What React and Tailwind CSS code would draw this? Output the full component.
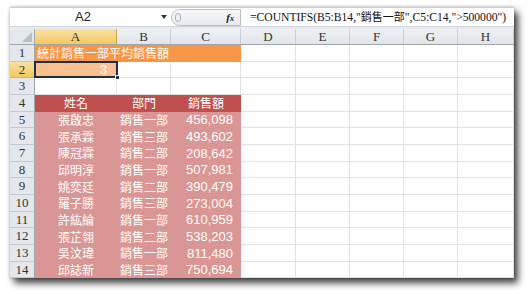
import React from 'react';

const colW = ['w-[82px]', 'w-[54px]', 'w-[70px]', 'w-[55px]', 'w-[54px]', 'w-[54px]', 'w-[54px]', 'w-[56px]'];
const colNames = ['A', 'B', 'C', 'D', 'E', 'F', 'G', 'H'];

const rows = [
    ['張啟忠', '銷售一部', '456,098'],
    ['張承霖', '銷售三部', '493,602'],
    ['陳冠霖', '銷售二部', '208,642'],
    ['邱明淳', '銷售一部', '507,981'],
    ['姚奕廷', '銷售二部', '390,479'],
    ['羅子勝', '銷售三部', '273,004'],
    ['許紘綸', '銷售一部', '610,959'],
    ['張芷翎', '銷售二部', '538,203'],
    ['吳汶瑋', '銷售一部', '811,480'],
    ['邱誌新', '銷售三部', '750,694'],
];

const cjk = "font-['Noto_Sans_CJK_TC',sans-serif]";
const num = "font-['Liberation_Sans','Noto_Sans_CJK_TC',sans-serif]";
const hdr = "font-['Liberation_Serif',serif]";

const RowHead = ({ n, active }) => (
    <div className={`w-[25px] shrink-0 h-full flex items-center justify-center border-r border-b text-[13px] text-[#333] ${hdr} ${active ? 'bg-gradient-to-b from-[#fbe2a2] to-[#f4c860] border-r-[#c9a24a] border-b-[#d6b45e]' : 'bg-[#e4e8ec] border-r-[#9ea7b2] border-b-[#c3c9d0]'}`}>
        {n}
    </div>
);

const Blank = ({ i }) => (
    <div className={`${colW[i]} shrink-0 h-full border-r border-b border-[#dfe1e3] bg-white`} />
);

const Row = ({ n, active, children }) => (
    <div className="flex h-[16.67px] shrink-0">
        <RowHead n={n} active={active} />
        {children}
    </div>
);

const FormulaBar = () => (
    <div className="h-[20px] flex items-center bg-white border-t border-[#c9ced4] border-b border-b-[#d0d5db]">
        <div className={`w-[146px] text-center text-[13px] text-[#222] ${num}`}>A2</div>
        <div className="w-[15px] flex justify-center">
            <span className="block w-0 h-0 border-l-[3px] border-r-[3px] border-t-[4px] border-l-transparent border-r-transparent border-t-[#333]" />
        </div>
        <div className="w-[70px] h-[17px] flex items-center rounded-l-full border border-[#b9c0c8] bg-gradient-to-b from-[#f7f8fa] to-[#e6e9ed]">
            <span className="ml-[3px] w-[6px] h-[9px] rounded-full border border-[#aab2bc] bg-[#eef0f3]" />
            <span className={`ml-auto mr-[6px] text-[11px] italic font-bold text-[#222] ${hdr}`}>f<span className="text-[8px]">x</span></span>
        </div>
        <div className={`flex-1 pl-[9px] whitespace-nowrap text-[11.6px] text-[#111] ${hdr} overflow-hidden`}>
            =COUNTIFS(B5:B14,"<span className={cjk + ' text-[11px]'}>銷售一部</span>",C5:C14,"&gt;500000")
        </div>
    </div>
);

export default function App() {
    return (
        <div className="w-[529px] h-[294px] bg-white overflow-hidden pt-[7px] pl-[10px]">
            <div className="w-[504px] h-[271px] bg-white flex flex-col overflow-hidden shadow-[4px_5px_7px_rgba(0,0,0,0.75),0_0_3px_rgba(0,0,0,0.25)]">
                <FormulaBar />
                <div className="h-[2px] bg-[#e9ecef] shrink-0" />

                {/* column headers */}
                <div className="flex h-[16px] shrink-0 border-b border-[#9da5ae]">
                    <div className="w-[25px] shrink-0 relative bg-[#e4e8ec] border-r border-[#9ea7b2]">
                        <svg className="absolute right-[2px] bottom-[2px]" width="10" height="10"><polygon points="10,0 10,10 0,10" fill="#b9bfc7" /></svg>
                    </div>
                    {colNames.map((c, i) => (
                        <div key={c} className={`${colW[i]} shrink-0 flex items-center justify-center border-r text-[13px] text-[#333] ${hdr} ${i === 0 ? 'bg-gradient-to-b from-[#fbe2a2] to-[#f4c860] border-[#c9a24a]' : 'bg-gradient-to-b from-[#eef1f4] to-[#e1e5ea] border-[#c9ced4]'}`}>
                            {c}
                        </div>
                    ))}
                </div>

                {/* row 1 */}
                <Row n={1}>
                    <div className={`w-[206px] shrink-0 h-full bg-[#f79646] text-white text-[12px] leading-none flex items-center pl-[2px] ${cjk}`}>
                        統計銷售一部平均銷售額
                    </div>
                    {[3, 4, 5, 6, 7].map(i => <Blank key={i} i={i} />)}
                </Row>

                {/* row 2 */}
                <Row n={2} active>
                    <div className="w-[82px] shrink-0 h-full relative bg-[#fac090] border-b border-[#fac090] flex items-center justify-end pr-[10px]">
                        <span className={`text-white text-[13px] ${num}`}>3</span>
                        <span className="absolute -left-[1px] -top-[1px] -right-[1px] -bottom-[1px] border-2 border-[#1b2f4a]" />
                        <span className="absolute -right-[3px] -bottom-[3px] w-[5px] h-[5px] bg-[#1b2f4a] border border-white" />
                    </div>
                    {[1, 2, 3, 4, 5, 6, 7].map(i => <Blank key={i} i={i} />)}
                </Row>

                {/* row 3 */}
                <Row n={3}>
                    {[0, 1, 2, 3, 4, 5, 6, 7].map(i => <Blank key={i} i={i} />)}
                </Row>

                {/* row 4 */}
                <Row n={4}>
                    <div className={`w-[206px] shrink-0 h-full bg-[#c0504d] text-white text-[12px] leading-none flex items-center ${cjk}`}>
                        <div className="w-[82px] text-center">姓名</div>
                        <div className="w-[54px] text-center">部門</div>
                        <div className="w-[70px] text-center">銷售額</div>
                    </div>
                    {[3, 4, 5, 6, 7].map(i => <Blank key={i} i={i} />)}
                </Row>

                {rows.map((r, idx) => (
                    <Row key={idx} n={idx + 5}>
                        <div className="w-[206px] shrink-0 h-full bg-[#da9694] text-white leading-none flex items-center">
                            <div className={`w-[82px] text-center text-[12px] ${cjk}`}>{r[0]}</div>
                            <div className={`w-[54px] text-center text-[12px] ${cjk}`}>{r[1]}</div>
                            <div className={`w-[70px] text-right pr-[8px] text-[13px] ${num}`}>{r[2]}</div>
                        </div>
                        {[3, 4, 5, 6, 7].map(i => <Blank key={i} i={i} />)}
                    </Row>
                ))}
            </div>
        </div>
    );
}
